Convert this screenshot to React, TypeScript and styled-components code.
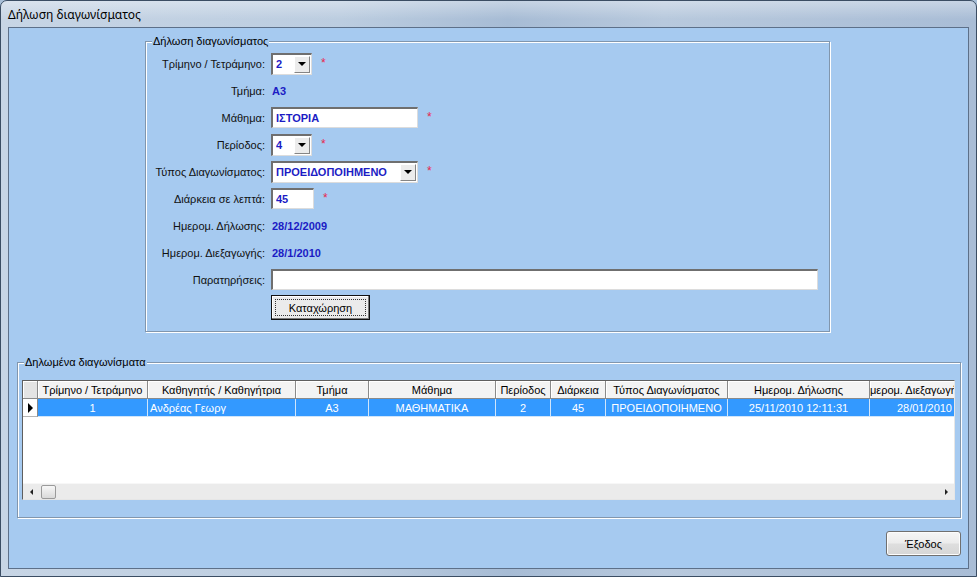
import React from 'react';
import styled, { createGlobalStyle } from 'styled-components';

interface Column {
  title: string;
  width: number;
  align: 'left' | 'center' | 'right';
}

const columns: Column[] = [
  { title: 'Τρίμηνο / Τετράμηνο', width: 110, align: 'center' },
  { title: 'Καθηγητής / Καθηγήτρια', width: 148, align: 'left' },
  { title: 'Τμήμα', width: 73, align: 'center' },
  { title: 'Μάθημα', width: 127, align: 'center' },
  { title: 'Περίοδος', width: 55, align: 'center' },
  { title: 'Διάρκεια', width: 55, align: 'center' },
  { title: 'Τύπος Διαγωνίσματος', width: 122, align: 'center' },
  { title: 'Ημερομ. Δήλωσης', width: 142, align: 'center' },
  { title: 'Ημερομ. Διεξαγωγής', width: 85, align: 'right' },
];

const rows = [
  ['1', 'Ανδρέας Γεωργ', 'A3', 'ΜΑΘΗΜΑΤΙΚΑ', '2', '45', 'ΠΡΟΕΙΔΟΠΟΙΗΜΕΝΟ', '25/11/2010 12:11:31', '28/01/2010'],
];

const template = `15px ${columns.map((c) => `${c.width}px`).join(' ')}`;

const ComboBox = ({ value, width }: { value: string; width: number }) => (
  <Combo $width={width}>
    <ComboValue>{value}</ComboValue>
    <DropButton>
      <DropArrow />
    </DropButton>
  </Combo>
);

const App = () => {
  return (
    <>
      <GlobalStyle />
      <Window>
        <TitleBar>Δήλωση διαγωνίσματος</TitleBar>
        <Client>
          <FormGroup>
            <Legend>Δήλωση διαγωνίσματος</Legend>
            <FormGrid>
              <Label>Τρίμηνο / Τετράμηνο:</Label>
              <Field>
                <ComboBox value="2" width={41} />
                <Required>*</Required>
              </Field>

              <Label>Τμήμα:</Label>
              <Field>
                <Value>A3</Value>
              </Field>

              <Label>Μάθημα:</Label>
              <Field>
                <TextInput $width={147} readOnly defaultValue="ΙΣΤΟΡΙΑ" />
                <Required>*</Required>
              </Field>

              <Label>Περίοδος:</Label>
              <Field>
                <ComboBox value="4" width={41} />
                <Required>*</Required>
              </Field>

              <Label>Τύπος Διαγωνίσματος:</Label>
              <Field>
                <ComboBox value="ΠΡΟΕΙΔΟΠΟΙΗΜΕΝΟ" width={147} />
                <Required>*</Required>
              </Field>

              <Label>Διάρκεια σε λεπτά:</Label>
              <Field>
                <TextInput $width={43} readOnly defaultValue="45" />
                <Required>*</Required>
              </Field>

              <Label>Ημερομ. Δήλωσης:</Label>
              <Field>
                <Value>28/12/2009</Value>
              </Field>

              <Label>Ημερομ. Διεξαγωγής:</Label>
              <Field>
                <Value>28/1/2010</Value>
              </Field>

              <Label>Παρατηρήσεις:</Label>
              <Field>
                <TextInput $width={547} readOnly defaultValue="" />
              </Field>

              <span />
              <Field>
                <SubmitButton>Καταχώρηση</SubmitButton>
              </Field>
            </FormGrid>
          </FormGroup>

          <ListGroup>
            <Legend>Δηλωμένα διαγωνίσματα</Legend>
            <DataGrid>
              <Viewport>
                <GridRow $template={template}>
                  <CornerCell />
                  {columns.map((c) => (
                    <HeaderCell key={c.title}>{c.title}</HeaderCell>
                  ))}
                </GridRow>
                {rows.map((r, i) => (
                  <GridRow key={i} $template={template}>
                    <RowHeader>
                      <RowArrow />
                    </RowHeader>
                    {r.map((v, j) => (
                      <DataCell key={j} $align={columns[j].align}>
                        {v}
                      </DataCell>
                    ))}
                  </GridRow>
                ))}
              </Viewport>
              <ScrollBar>
                <ScrollArrow>
                  <ArrowLeft />
                </ScrollArrow>
                <Thumb />
                <ScrollTrack />
                <ScrollArrow>
                  <ArrowRight />
                </ScrollArrow>
              </ScrollBar>
            </DataGrid>
          </ListGroup>

          <Footer>
            <ExitButton>Έξοδος</ExitButton>
          </Footer>
        </Client>
      </Window>
    </>
  );
};

export default App;

const GlobalStyle = createGlobalStyle`
  html, body {
    margin: 0;
    padding: 0;
    background: #a8bfd8;
  }
  body {
    font-family: "Liberation Sans", Arial, sans-serif;
    font-size: 11px;
    color: #000;
  }
  * {
    box-sizing: border-box;
  }
`;

const Window = styled.div`
  width: 977px;
  height: 577px;
  display: flex;
  flex-direction: column;
  border: 1px solid #3b4d63;
  border-radius: 7px 7px 0 0;
  background: linear-gradient(90deg, #c7d5e5 0%, #bccde0 35%, #a7bcd5 52%, #b8c9dd 68%, #a9bdd6 100%);
  overflow: hidden;
`;

const TitleBar = styled.div`
  height: 26px;
  line-height: 27px;
  padding-left: 7px;
  font-family: "Noto Sans", "Open Sans", sans-serif;
  font-size: 12px;
  color: #000;
  background: linear-gradient(180deg, rgba(255, 255, 255, 0.35), rgba(255, 255, 255, 0) 70%);
`;

const Client = styled.div`
  flex: 1;
  margin: 0 7px 7px 7px;
  border: 1px solid #5d7089;
  background: #a6caf0;
  display: flex;
  flex-direction: column;
`;

const Group = styled.div`
  position: relative;
  border: 1px solid #8196ad;
  box-shadow: 1px 1px 0 #fff, inset 1px 1px 0 #fff;
`;

const FormGroup = styled(Group)`
  margin: 13px 0 0 136px;
  width: 685px;
  height: 291px;
  padding-top: 8px;
`;

const ListGroup = styled(Group)`
  margin: 30px 7px 0 8px;
  height: 156px;
  padding: 17px 5px 0 4px;
`;

const Legend = styled.span`
  position: absolute;
  top: -7px;
  left: 6px;
  padding: 0 1px;
  background: #a6caf0;
  line-height: 13px;
  color: #000;
`;

const FormGrid = styled.div`
  display: grid;
  grid-template-columns: 119px 1fr;
  grid-auto-rows: 27px;
  column-gap: 6px;
  align-items: center;
`;

const Label = styled.span`
  text-align: right;
  white-space: nowrap;
  color: #111;
`;

const Field = styled.div`
  display: flex;
  align-items: center;
  gap: 9px;
`;

const Value = styled.span`
  font-weight: bold;
  color: #1c1cc4;
  padding-left: 1px;
`;

const Required = styled.span`
  color: #e8264e;
  font-size: 12px;
  align-self: flex-start;
  margin-top: 3px;
`;

const Sunken = `
  border-style: solid;
  border-width: 2px 1px 1px 2px;
  border-color: #6f6f6f #dcdcdc #dcdcdc #6f6f6f;
  background: #fff;
`;

const Combo = styled.div<{ $width: number }>`
  ${Sunken}
  width: ${(p) => p.$width}px;
  height: 22px;
  display: flex;
  align-items: center;
  padding: 0 1px 0 3px;
`;

const ComboValue = styled.span`
  flex: 1;
  font-weight: bold;
  color: #1c1cc4;
  white-space: nowrap;
  overflow: hidden;
`;

const DropButton = styled.span`
  width: 16px;
  height: 17px;
  display: flex;
  align-items: center;
  justify-content: center;
  background: #ececec;
  border: 1px solid;
  border-color: #fff #858585 #858585 #fff;
`;

const DropArrow = styled.span`
  width: 0;
  height: 0;
  border-top: 4px solid #000;
  border-left: 4px solid transparent;
  border-right: 4px solid transparent;
`;

const TextInput = styled.input<{ $width: number }>`
  ${Sunken}
  width: ${(p) => p.$width}px;
  height: 21px;
  padding: 0 3px;
  margin: 0;
  font-family: "Liberation Sans", Arial, sans-serif;
  font-size: 11px;
  font-weight: bold;
  color: #1c1cc4;
  outline: none;
`;

const SubmitButton = styled.button`
  position: relative;
  width: 99px;
  height: 25px;
  margin-top: 2px;
  padding: 0;
  font-family: "Liberation Sans", Arial, sans-serif;
  font-size: 11px;
  color: #000;
  background: #ebebeb;
  border: 1px solid #111;
  box-shadow: inset -1px -1px 0 #7c7c7c, inset 1px 1px 0 #fff;
  &::after {
    content: '';
    position: absolute;
    inset: 3px;
    border: 1px dotted #333;
  }
`;

const DataGrid = styled.div`
  height: 120px;
  display: flex;
  flex-direction: column;
  border: 1px solid;
  border-color: #5f5f5f #e6e6e6 #e6e6e6 #5f5f5f;
  background: #fff;
`;

const Viewport = styled.div`
  flex: 1;
  overflow: hidden;
`;

const GridRow = styled.div<{ $template: string }>`
  display: grid;
  grid-template-columns: ${(p) => p.$template};
  height: 18px;
  width: max-content;
`;

const HeaderCell = styled.div`
  display: flex;
  align-items: center;
  justify-content: center;
  overflow: hidden;
  white-space: nowrap;
  background: #f3f3f3;
  border-right: 1px solid #8a8a8a;
  border-bottom: 1px solid #8a8a8a;
  box-shadow: inset 1px 1px 0 #fff;
  color: #000;
`;

const CornerCell = styled(HeaderCell)`
  background: #e4e4e4;
`;

const RowHeader = styled.div`
  display: flex;
  align-items: center;
  justify-content: center;
  background: #fff;
  border-right: 1px solid #8a8a8a;
  border-bottom: 1px solid #b5b5b5;
`;

const RowArrow = styled.span`
  width: 0;
  height: 0;
  border-left: 5px solid #000;
  border-top: 5px solid transparent;
  border-bottom: 5px solid transparent;
  margin-left: 1px;
`;

const DataCell = styled.div<{ $align: 'left' | 'center' | 'right' }>`
  display: flex;
  align-items: center;
  justify-content: ${(p) =>
    p.$align === 'left' ? 'flex-start' : p.$align === 'right' ? 'flex-end' : 'center'};
  padding: 0 2px;
  overflow: hidden;
  white-space: nowrap;
  background: #3399ff;
  color: #fff;
  border-right: 1px solid #cfe5fb;
  border-bottom: 1px solid #cfe5fb;
`;

const ScrollBar = styled.div`
  height: 16px;
  display: flex;
  align-items: center;
  background: #ebebeb;
  border-top: 1px solid #f7f7f7;
`;

const ScrollArrow = styled.div`
  width: 16px;
  height: 100%;
  display: flex;
  align-items: center;
  justify-content: center;
`;

const ArrowLeft = styled.span`
  width: 0;
  height: 0;
  border-right: 3px solid #222;
  border-top: 3px solid transparent;
  border-bottom: 3px solid transparent;
`;

const ArrowRight = styled.span`
  width: 0;
  height: 0;
  border-left: 3px solid #222;
  border-top: 3px solid transparent;
  border-bottom: 3px solid transparent;
`;

const Thumb = styled.div`
  width: 15px;
  height: 14px;
  margin-left: 2px;
  border: 1px solid #9a9a9a;
  border-radius: 2px;
  background: linear-gradient(180deg, #f7f7f7, #dadada);
`;

const ScrollTrack = styled.div`
  flex: 1;
`;

const Footer = styled.div`
  display: flex;
  justify-content: flex-end;
  padding: 13px 7px 0 0;
`;

const ExitButton = styled.button`
  width: 75px;
  height: 25px;
  padding: 0;
  font-family: "Liberation Sans", Arial, sans-serif;
  font-size: 11px;
  color: #000;
  border: 1px solid #707070;
  border-radius: 3px;
  background: linear-gradient(180deg, #f6f6f6 0%, #ececec 48%, #dedede 52%, #d6d6d6 100%);
  box-shadow: inset 0 0 0 1px #fcfcfc;
`;
